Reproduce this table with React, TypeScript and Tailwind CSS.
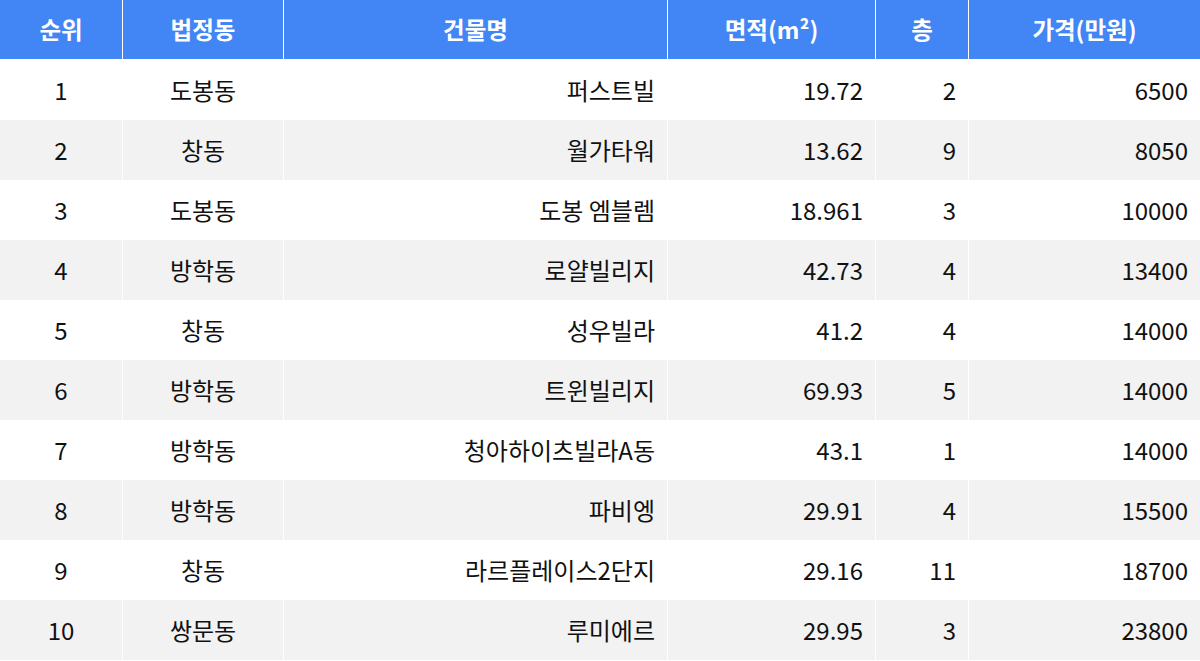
import React from "react";

const rows: [string, string, string, string, string, string][] = [
  ["1", "도봉동", "퍼스트빌", "19.72", "2", "6500"],
  ["2", "창동", "월가타워", "13.62", "9", "8050"],
  ["3", "도봉동", "도봉 엠블렘", "18.961", "3", "10000"],
  ["4", "방학동", "로얄빌리지", "42.73", "4", "13400"],
  ["5", "창동", "성우빌라", "41.2", "4", "14000"],
  ["6", "방학동", "트윈빌리지", "69.93", "5", "14000"],
  ["7", "방학동", "청아하이츠빌라A동", "43.1", "1", "14000"],
  ["8", "방학동", "파비엥", "29.91", "4", "15500"],
  ["9", "창동", "라르플레이스2단지", "29.16", "11", "18700"],
  ["10", "쌍문동", "루미에르", "29.95", "3", "23800"],
];

const headers = ["순위", "법정동", "건물명", "면적(m²)", "층", "가격(만원)"];

export default function App() {
  return (
    <div
      className="w-[1200px] h-[661px] bg-white overflow-hidden"
      style={{ fontFamily: '"Noto Sans CJK KR", "Noto Sans", sans-serif' }}
    >
      <div className="grid grid-cols-[122px_160px_383px_207px_92px_231px] gap-x-px">
        {headers.map((h) => (
          <div
            key={h}
            className="h-[59px] mb-px bg-[#4285f4] text-white font-bold text-[23.5px] flex items-center justify-center"
          >
            {h}
          </div>
        ))}
        {rows.map((r, i) => {
          const bg = i % 2 === 1 ? "bg-[#f2f2f2]" : "bg-white";
          return (
            <React.Fragment key={i}>
              <div className={`${bg} h-[60px] flex items-center justify-center text-[24px] text-[#111]`}>{r[0]}</div>
              <div className={`${bg} h-[60px] flex items-center justify-center text-[24px] text-[#111]`}>{r[1]}</div>
              <div className={`${bg} h-[60px] flex items-center justify-end pr-[12px] text-[24px] text-[#111]`}>{r[2]}</div>
              <div className={`${bg} h-[60px] flex items-center justify-end pr-[12px] text-[24px] text-[#111]`}>{r[3]}</div>
              <div className={`${bg} h-[60px] flex items-center justify-end pr-[12px] text-[24px] text-[#111]`}>{r[4]}</div>
              <div className={`${bg} h-[60px] flex items-center justify-end pr-[12px] text-[24px] text-[#111]`}>{r[5]}</div>
            </React.Fragment>
          );
        })}
      </div>
    </div>
  );
}
